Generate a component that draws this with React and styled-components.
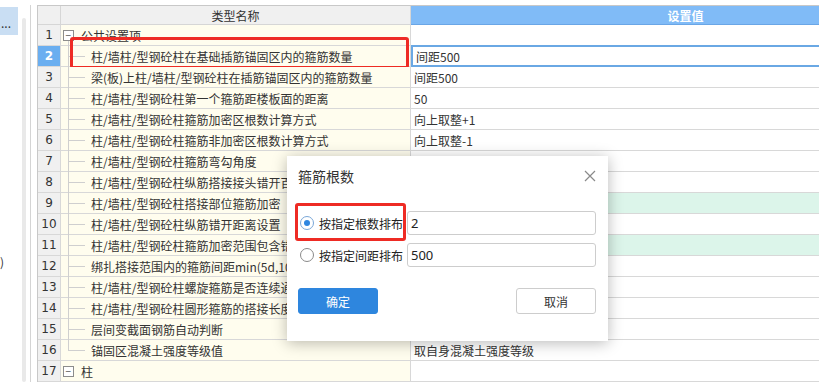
import React from 'react'
import styled, { createGlobalStyle, css } from 'styled-components'

const GlobalStyle = createGlobalStyle`
  html, body {
    margin: 0;
    padding: 0;
    background: #fff;
    overflow: hidden;
  }
  body {
    font-family: "Noto Sans CJK SC", "Noto Sans", "Liberation Sans", sans-serif;
    font-size: 12px;
    color: #333;
  }
`

// values of rows 7-15 sit under the dialog and are not visible
const rows = [
  { group: true, name: '公共设置项' },
  { name: '柱/墙柱/型钢砼柱在基础插筋锚固区内的箍筋数量', value: '间距500', selected: true },
  { name: '梁(板)上柱/墙柱/型钢砼柱在插筋锚固区内的箍筋数量', value: '间距500' },
  { name: '柱/墙柱/型钢砼柱第一个箍筋距楼板面的距离', value: '50' },
  { name: '柱/墙柱/型钢砼柱箍筋加密区根数计算方式', value: '向上取整+1' },
  { name: '柱/墙柱/型钢砼柱箍筋非加密区根数计算方式', value: '向上取整-1' },
  { name: '柱/墙柱/型钢砼柱箍筋弯勾角度' },
  { name: '柱/墙柱/型钢砼柱纵筋搭接接头错开百分率' },
  { name: '柱/墙柱/型钢砼柱搭接部位箍筋加密', green: true },
  { name: '柱/墙柱/型钢砼柱纵筋错开距离设置' },
  { name: '柱/墙柱/型钢砼柱箍筋加密范围包含错开距离', green: true },
  { name: '绑扎搭接范围内的箍筋间距min(5d,100)' },
  { name: '柱/墙柱/型钢砼柱螺旋箍筋是否连续通过' },
  { name: '柱/墙柱/型钢砼柱圆形箍筋的搭接长度' },
  { name: '层间变截面钢筋自动判断' },
  { name: '锚固区混凝土强度等级值', value: '取自身混凝土强度等级', last: true },
  { group: true, name: '柱' },
]

export default function App() {
  return (
    <>
      <GlobalStyle />
      <Page>
        <SidePanel>
          <SideItem>...</SideItem>
          <SideText>)</SideText>
          <SideScroll />
        </SidePanel>

        <Grid>
          <HeaderRow>
            <HeadCell />
            <HeadCell>类型名称</HeadCell>
            <HeadCell $accent>设置值</HeadCell>
          </HeaderRow>

          {rows.map((row, i) => (
            <Row key={i}>
              <NumCell $selected={row.selected}>{i + 1}</NumCell>
              <NameCell>
                {row.group ? (
                  <>
                    <Expander $line={i === 0}>−</Expander>
                    <GroupLabel>{row.name}</GroupLabel>
                  </>
                ) : (
                  <>
                    <Guide $last={row.last} />
                    <span>{row.name}</span>
                  </>
                )}
                {row.selected && <Highlight />}
              </NameCell>
              <ValueCell $selected={row.selected} $green={row.green}>
                {row.value}
              </ValueCell>
            </Row>
          ))}
        </Grid>

        <Dialog>
          <DialogHeader>
            <DialogTitle>箍筋根数</DialogTitle>
            <CloseButton>
              <svg width="12" height="12" viewBox="0 0 12 12">
                <path d="M1 1 L11 11 M11 1 L1 11" stroke="#8a8a8a" strokeWidth="1.2" fill="none" />
              </svg>
            </CloseButton>
          </DialogHeader>

          <DialogBody>
            <OptionRow>
              <OptionLabel>
                <Radio $checked />
                按指定根数排布
              </OptionLabel>
              <TextInput>2</TextInput>
            </OptionRow>
            <OptionRow>
              <OptionLabel>
                <Radio />
                按指定间距排布
              </OptionLabel>
              <TextInput>500</TextInput>
            </OptionRow>
          </DialogBody>

          <DialogFooter>
            <Button $primary>确定</Button>
            <Button>取消</Button>
          </DialogFooter>

          <DialogHighlight />
        </Dialog>
      </Page>
    </>
  )
}

const Page = styled.div`
  position: relative;
  width: 819px;
  height: 382px;
  display: flex;
  overflow: hidden;
`

const SidePanel = styled.div`
  position: relative;
  width: 30px;
  flex-shrink: 0;
  margin-top: 5px;
  border-right: 1px solid #d4d4d4;
  display: flex;
  flex-direction: column;
`

const SideItem = styled.div`
  width: 18px;
  height: 28px;
  margin-top: 2px;
  background: #c9def3;
  color: #333;
  font-size: 12px;
  line-height: 12px;
  display: flex;
  align-items: flex-end;
  padding: 0 0 6px 1px;
  box-sizing: border-box;
`

const SideText = styled.div`
  margin-top: 220px;
  font-size: 12px;
  line-height: 14px;
`

const SideScroll = styled.div`
  position: absolute;
  left: 22px;
  top: 13px;
  bottom: 0;
  width: 4px;
  border-radius: 2px;
  background: #e9e9e9;
`

const Grid = styled.div`
  margin-left: 6px;
  margin-top: 5px;
  border-left: 1px solid #c8c8c8;
  border-top: 1px solid #c8c8c8;
  width: 924px;
  display: flex;
  flex-direction: column;
  flex-shrink: 0;
`

const columns = css`
  display: grid;
  grid-template-columns: 23px 350px 550px;
`

const HeaderRow = styled.div`
  ${columns};
  height: 19px;
`

const HeadCell = styled.div`
  display: flex;
  align-items: center;
  justify-content: center;
  background: ${p => (p.$accent ? '#80bbf7' : '#f0f0f0')};
  color: ${p => (p.$accent ? '#fff' : '#333')};
  font-weight: ${p => (p.$accent ? 700 : 400)};
  border-right: 1px solid ${p => (p.$accent ? '#80bbf7' : '#d6d6d6')};
  border-bottom: 1px solid ${p => (p.$accent ? '#6aa6e6' : '#d6d6d6')};
  font-size: 12px;
`

const Row = styled.div`
  ${columns};
  height: 21px;
`

const cellBase = css`
  position: relative;
  box-sizing: border-box;
  border-bottom: 1px solid #d8d8d8;
  border-right: 1px solid #d8d8d8;
  display: flex;
  align-items: center;
  white-space: nowrap;
  font-size: 12px;
`

const NumCell = styled.div`
  ${cellBase};
  justify-content: center;
  font-family: "DejaVu Sans", "Liberation Sans", sans-serif;
  font-size: 12px;
  background: ${p => (p.$selected ? '#6aaef0' : '#f0f0f0')};
  color: ${p => (p.$selected ? '#fff' : '#333')};
  font-weight: ${p => (p.$selected ? 700 : 400)};
`

const NameCell = styled.div`
  ${cellBase};
  background: #fffdee;
  padding-left: 2px;
`

const Guide = styled.span`
  position: relative;
  align-self: stretch;
  width: 17px;
  margin: -1px 6px -1px 5px;
  flex-shrink: 0;
  &::before {
    content: '';
    position: absolute;
    left: 0;
    top: 0;
    height: ${p => (p.$last ? '50%' : 'calc(100% + 1px)')};
    border-left: 1px solid #cfcfcf;
  }
  &::after {
    content: '';
    position: absolute;
    left: 0;
    top: 50%;
    width: 17px;
    border-top: 1px solid #cfcfcf;
  }
`

const Expander = styled.span`
  position: relative;
  width: 9px;
  height: 9px;
  border: 1px solid #8c8c8c;
  display: flex;
  align-items: center;
  justify-content: center;
  font-family: "Liberation Sans", sans-serif;
  font-size: 10px;
  line-height: 9px;
  color: #555;
  background: #fff;
  flex-shrink: 0;
  ${p => p.$line && css`
    &::after {
      content: '';
      position: absolute;
      left: 4px;
      top: 10px;
      height: 6px;
      border-left: 1px solid #cfcfcf;
    }
  `}
`

const GroupLabel = styled.span`
  margin-left: 7px;
`

const Highlight = styled.div`
  position: absolute;
  left: 9px;
  top: -9px;
  width: 339px;
  height: 32px;
  box-sizing: border-box;
  border: 3px solid #ee2b24;
  border-radius: 3px;
  pointer-events: none;
`

const ValueCell = styled.div`
  ${cellBase};
  padding-left: 3px;
  background: ${p => (p.$green ? '#dcf5ea' : '#fff')};
  ${p => p.$selected && css`
    border: 2px solid #6aa8e4;
    margin-top: -1px;
    height: 22px;
    padding-left: 3px;
  `}
`

const Dialog = styled.div`
  position: absolute;
  left: 287px;
  top: 156px;
  width: 321px;
  height: 185px;
  box-sizing: border-box;
  background: #fff;
  box-shadow: 0 2px 14px rgba(0, 0, 0, 0.28);
  padding: 0 12px 0 11px;
  display: flex;
  flex-direction: column;
`

const DialogHeader = styled.div`
  height: 40px;
  display: flex;
  align-items: center;
  justify-content: space-between;
`

const DialogTitle = styled.div`
  font-size: 14px;
  color: #333;
`

const CloseButton = styled.div`
  display: flex;
`

const DialogBody = styled.div`
  margin-top: 15px;
  display: flex;
  flex-direction: column;
  gap: 8px;
`

const OptionRow = styled.div`
  display: flex;
  align-items: center;
  height: 24px;
`

const OptionLabel = styled.div`
  width: 109px;
  display: flex;
  align-items: center;
  gap: 5px;
  font-size: 12px;
  color: #222;
  white-space: nowrap;
`

const Radio = styled.span`
  width: 12px;
  height: 12px;
  margin-left: 2px;
  border-radius: 50%;
  border: 1px solid ${p => (p.$checked ? '#7aa7d8' : '#8a8a8a')};
  background: #fff;
  display: flex;
  align-items: center;
  justify-content: center;
  flex-shrink: 0;
  &::after {
    content: '';
    width: 6px;
    height: 6px;
    border-radius: 50%;
    background: ${p => (p.$checked ? '#2f86e0' : 'transparent')};
  }
`

const TextInput = styled.div`
  flex: 1;
  height: 24px;
  box-sizing: border-box;
  border: 1px solid #cdcdcd;
  border-radius: 3px;
  display: flex;
  align-items: center;
  padding-left: 3px;
  font-size: 13px;
  font-family: "Noto Sans", "Liberation Sans", sans-serif;
  color: #222;
`

const DialogFooter = styled.div`
  margin-top: 21px;
  display: flex;
  justify-content: space-between;
`

const Button = styled.div`
  width: 80px;
  height: 26px;
  box-sizing: border-box;
  border-radius: 3px;
  display: flex;
  align-items: center;
  justify-content: center;
  font-size: 12px;
  background: ${p => (p.$primary ? '#2e86de' : '#fff')};
  color: ${p => (p.$primary ? '#fff' : '#333')};
  border: 1px solid ${p => (p.$primary ? '#2e86de' : '#cdcdcd')};
`

const DialogHighlight = styled.div`
  position: absolute;
  left: 8px;
  top: 47px;
  width: 111px;
  height: 38px;
  box-sizing: border-box;
  border: 3px solid #ee2b24;
  border-radius: 3px;
  pointer-events: none;
`
